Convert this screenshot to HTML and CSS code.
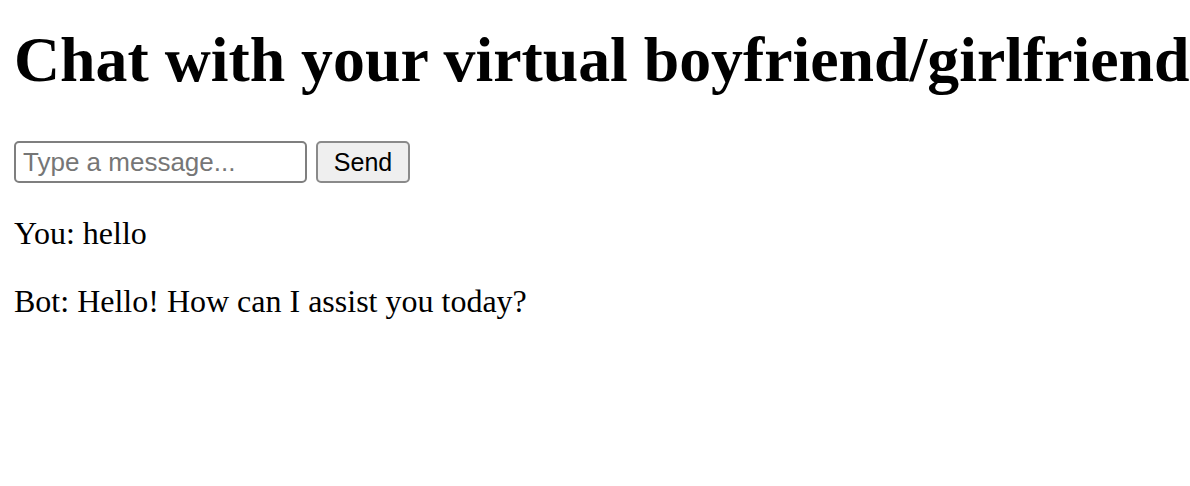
FILE: index.html
```html
<!DOCTYPE html>
<html lang="en">
<head>
<meta charset="utf-8">
<title>Chat</title>
<link rel="stylesheet" href="styles.css">
</head>
<body>
<main class="page">
  <h1 class="title">Chat with your virtual boyfriend/girlfriend</h1>
  <form class="composer" onsubmit="return false;">
    <input class="message-input" type="text" placeholder="Type a message...">
    <button class="send-btn" type="button">Send</button>
  </form>
  <div class="messages">
    <p class="msg">You: hello</p>
    <p class="msg">Bot: Hello! How can I assist you today?</p>
  </div>
</main>
</body>
</html>
```

FILE: styles.css
```css
html, body {
  margin: 0;
  padding: 0;
  background: #ffffff;
}

body {
  font-family: "Liberation Serif", "Times New Roman", serif;
  color: #000000;
  overflow: hidden;
}

.page {
  padding: 24px 0 0 14px;
}

.title {
  margin: 0;
  font-size: 63.8px;
  line-height: 72px;
  font-weight: bold;
  white-space: nowrap;
}

.composer {
  display: flex;
  align-items: center;
  gap: 9px;
  margin: 45px 0 0 0;
}

.message-input {
  box-sizing: border-box;
  width: 293px;
  height: 42px;
  margin: 0;
  padding: 0 7px;
  border: 2px solid #7f7f7f;
  border-radius: 5px;
  font-family: "Liberation Sans", Arial, sans-serif;
  font-size: 26px;
  color: #000000;
  background: #ffffff;
  outline: none;
}

.message-input::placeholder {
  color: #767676;
}

.send-btn {
  box-sizing: border-box;
  width: 94px;
  height: 42px;
  margin: 0;
  padding: 0;
  border: 2px solid #8a8a8a;
  border-radius: 5px;
  background: #efefef;
  font-family: "Liberation Sans", Arial, sans-serif;
  font-size: 25px;
  color: #000000;
}

.messages {
  display: flex;
  flex-direction: column;
  gap: 31px;
  margin-top: 32px;
}

.msg {
  margin: 0;
  font-size: 32px;
  line-height: 37px;
}
```
